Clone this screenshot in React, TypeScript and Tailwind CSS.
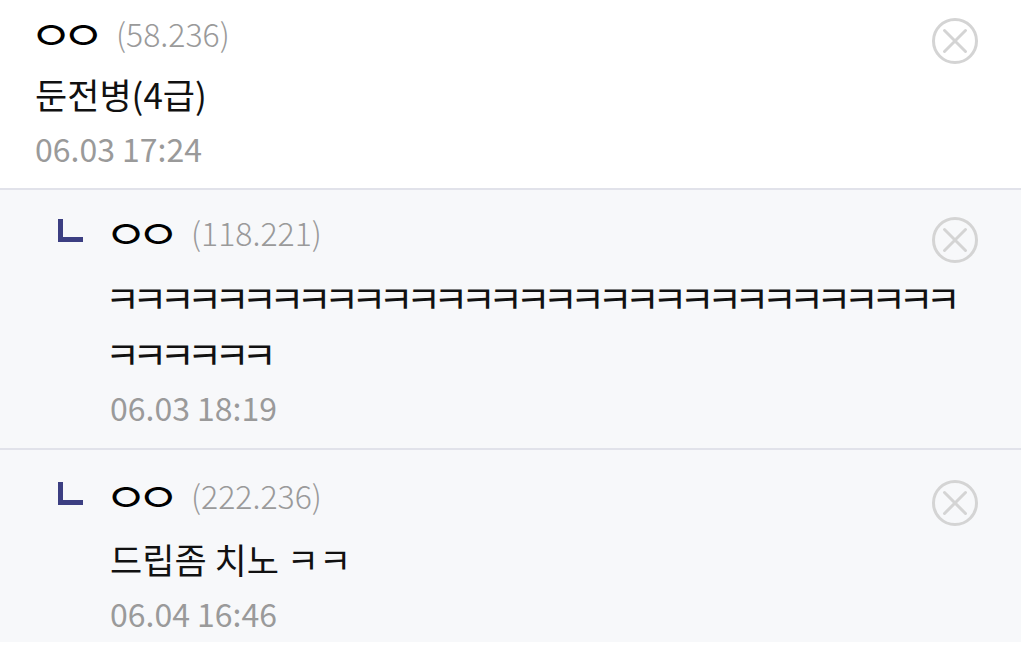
import React from "react";

type Comment = {
  name: string;
  score: string;
  body: string;
  date: string;
  reply?: boolean;
  pad: string;
  bodyClass: string;
};

const comments: Comment[] = [
  {
    name: "ㅇㅇ",
    score: "(58.236)",
    body: "둔전병(4급)",
    date: "06.03 17:24",
    pad: "bg-white pl-[35px] pt-[4px] pb-[14px] border-b-2 border-[#e1e2ea]",
    bodyClass: "mt-[4px] text-[35px]",
  },
  {
    name: "ㅇㅇ",
    score: "(118.221)",
    body: "ㅋㅋㅋㅋㅋㅋㅋㅋㅋㅋㅋㅋㅋㅋㅋㅋㅋㅋㅋㅋㅋㅋㅋㅋㅋㅋㅋㅋㅋㅋㅋㅋㅋㅋㅋㅋㅋ",
    date: "06.03 18:19",
    reply: true,
    pad: "bg-[#f7f8fa] pl-[58px] pt-[13px] pb-[15px] border-b-2 border-[#e1e2ea]",
    bodyClass: "mt-[8px] ml-[-5px] text-[38px] tracking-[-7.6px]",
  },
  {
    name: "ㅇㅇ",
    score: "(222.236)",
    body: "드립좀 치노 ㅋㅋ",
    date: "06.04 16:46",
    reply: true,
    pad: "bg-[#f7f8fa] pl-[58px] pt-[16px] pb-[3px]",
    bodyClass: "mt-[7px] text-[35px]",
  },
];

function CloseIcon() {
  return (
    <svg width="48" height="48" viewBox="0 0 48 48" fill="none" className="mt-[15px] shrink-0">
      <circle cx="24" cy="24" r="21.5" stroke="#d4d4d4" strokeWidth="3" />
      <path d="M13.5 13.5 L34.5 34.5 M34.5 13.5 L13.5 34.5" stroke="#d4d4d4" strokeWidth="3" strokeLinecap="round" />
    </svg>
  );
}

function CommentRow({ c }: { c: Comment }) {
  return (
    <div className={"flex w-full pr-[42px] " + c.pad}>
      {c.reply && (
        <div className="mt-[16px] mr-[27px] h-[23px] w-[25px] shrink-0 border-b-[5px] border-l-[5px] border-[#3c3f82]" />
      )}
      <div className="flex min-w-0 grow flex-col">
        <div className="flex h-[58px] items-center justify-between">
          <div className="flex items-center">
            <span className="ml-[-6px] w-[87px] shrink-0 leading-none">
              <span className="inline-block origin-left scale-x-[1.2] text-[40px] tracking-[-10px] text-black">
                {c.name}
              </span>
            </span>
            <span className="text-[32px] font-light text-[#9a9a9a]">{c.score}</span>
          </div>
          <CloseIcon />
        </div>
        <div className={"break-all leading-[56px] text-[#111] " + c.bodyClass}>{c.body}</div>
        <div className="text-[32px] leading-[52px] text-[#9a9a9a]">{c.date}</div>
      </div>
    </div>
  );
}

export default function App() {
  return (
    <div
      className="flex h-[648px] w-[1024px] flex-col bg-white"
      style={{ fontFamily: "'Noto Sans CJK KR', 'Noto Sans', sans-serif" }}
    >
      <div className="flex w-[1021px] flex-col">
        {comments.map((c, i) => (
          <CommentRow key={i} c={c} />
        ))}
      </div>
    </div>
  );
}
